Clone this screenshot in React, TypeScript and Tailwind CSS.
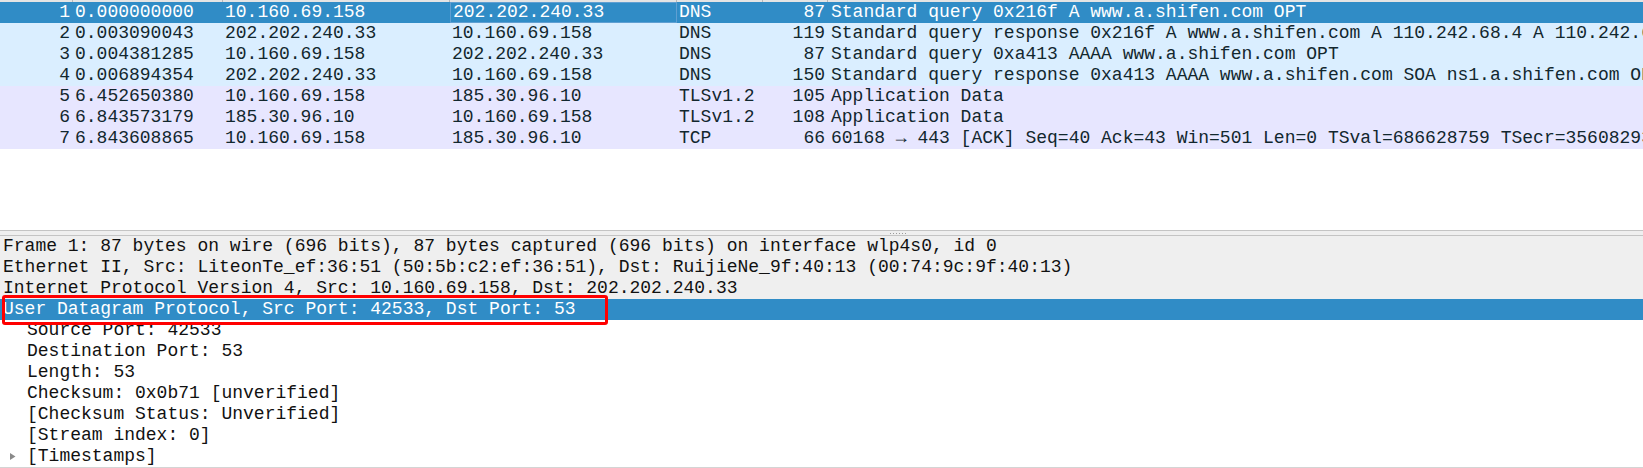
import React from "react";

type Pkt = {
  no: string;
  time: string;
  src: string;
  dst: string;
  proto: string;
  len: string;
  info: string;
  kind: "udp" | "tcp";
};

const packets: Pkt[] = [
  { no: "1", time: "0.000000000", src: "10.160.69.158", dst: "202.202.240.33", proto: "DNS", len: "87", info: "Standard query 0x216f A www.a.shifen.com OPT", kind: "udp" },
  { no: "2", time: "0.003090043", src: "202.202.240.33", dst: "10.160.69.158", proto: "DNS", len: "119", info: "Standard query response 0x216f A www.a.shifen.com A 110.242.68.4 A 110.242.68.3 OPT", kind: "udp" },
  { no: "3", time: "0.004381285", src: "10.160.69.158", dst: "202.202.240.33", proto: "DNS", len: "87", info: "Standard query 0xa413 AAAA www.a.shifen.com OPT", kind: "udp" },
  { no: "4", time: "0.006894354", src: "202.202.240.33", dst: "10.160.69.158", proto: "DNS", len: "150", info: "Standard query response 0xa413 AAAA www.a.shifen.com SOA ns1.a.shifen.com OPT", kind: "udp" },
  { no: "5", time: "6.452650380", src: "10.160.69.158", dst: "185.30.96.10", proto: "TLSv1.2", len: "105", info: "Application Data", kind: "tcp" },
  { no: "6", time: "6.843573179", src: "185.30.96.10", dst: "10.160.69.158", proto: "TLSv1.2", len: "108", info: "Application Data", kind: "tcp" },
  { no: "7", time: "6.843608865", src: "10.160.69.158", dst: "185.30.96.10", proto: "TCP", len: "66", info: "60168 \u2192 443 [ACK] Seq=40 Ack=43 Win=501 Len=0 TSval=686628759 TSecr=3560829381", kind: "tcp" },
];

const cols = "grid grid-cols-[73px_150px_227px_227px_86px_65px_1fr]";

function PacketRow({ p, selected }: { p: Pkt; selected: boolean }) {
  const bg = selected
    ? "bg-[#308cc6] text-white"
    : p.kind === "udp"
    ? "bg-[#daeeff] text-[#12272e]"
    : "bg-[#e7e6ff] text-[#12272e]";
  return (
    <div className={`${cols} h-[21px] whitespace-nowrap ${bg}`}>
      <div className="pr-[3px] text-right overflow-hidden">{p.no}</div>
      <div className="pl-[2px] overflow-hidden">{p.time}</div>
      <div className="pl-[2px] overflow-hidden">{p.src}</div>
      <div
        className={`pl-[2px] overflow-hidden ${
          selected ? "border border-[#5f9fd2] pl-[1px] leading-[19px]" : ""
        }`}
      >
        {p.dst}
      </div>
      <div className="pl-[2px] overflow-hidden">{p.proto}</div>
      <div className="pr-[3px] text-right overflow-hidden">{p.len}</div>
      <div className="pl-[3px] overflow-hidden">{p.info}</div>
    </div>
  );
}

function DetailRow({
  text,
  indent,
  tone,
  arrow,
  highlight,
}: {
  text: string;
  indent?: boolean;
  tone: "grey" | "white" | "sel";
  arrow?: boolean;
  highlight?: boolean;
}) {
  const bg =
    tone === "sel"
      ? "bg-[#308cc6] text-white"
      : tone === "grey"
      ? "bg-[#efefef] text-[#111111]"
      : "bg-white text-[#111111]";
  return (
    <div className={`relative h-[21px] flex items-center whitespace-nowrap ${bg} ${highlight ? "z-10" : ""}`}>
      <div className={`${indent ? "w-[27px]" : "w-[3px]"} h-full flex items-center shrink-0`}>
        {arrow && (
          <svg width="27" height="21" viewBox="0 0 27 21" className="shrink-0">
            <path d="M10 7 L15.5 10.5 L10 14 Z" fill="#8a8a8a" />
          </svg>
        )}
      </div>
      <span>{text}</span>
      {highlight && (
        <div className="absolute left-[2px] top-[-4px] w-[606px] h-[30px] border-[3px] border-[#ff0000] rounded-[3px] pointer-events-none z-20" />
      )}
    </div>
  );
}

export default function App() {
  return (
    <div className="w-[1643px] h-[468px] overflow-hidden bg-white font-['Liberation_Mono','DejaVu_Sans_Mono',monospace] text-[18px] leading-[21px]">
      {/* packet list */}
      <div className="h-[230px] overflow-hidden">
        <div className={`${cols} h-[2px] bg-[#e4e4e4]`}>
          <div className="border-r border-[#b8b8b8]" />
          <div className="border-r border-[#b8b8b8]" />
          <div className="border-r border-[#b8b8b8]" />
          <div className="border-r border-[#b8b8b8]" />
          <div className="border-r border-[#b8b8b8]" />
          <div className="border-r border-[#b8b8b8]" />
          <div />
        </div>
        {packets.map((p, i) => (
          <PacketRow key={p.no} p={p} selected={i === 0} />
        ))}
      </div>

      {/* splitter */}
      <div className="h-[6px] border-t border-b border-[#c4c4c4] bg-[#efefef] flex items-center justify-center">
        <div className="ml-[152px] flex gap-[2px]">
          {[0, 1, 2, 3, 4, 5].map((d) => (
            <div key={d} className="w-[1px] h-[1px] bg-[#9a9a9a]" />
          ))}
        </div>
      </div>

      {/* packet details */}
      <div className="flex flex-col">
        <DetailRow tone="grey" text="Frame 1: 87 bytes on wire (696 bits), 87 bytes captured (696 bits) on interface wlp4s0, id 0" />
        <DetailRow tone="grey" text="Ethernet II, Src: LiteonTe_ef:36:51 (50:5b:c2:ef:36:51), Dst: RuijieNe_9f:40:13 (00:74:9c:9f:40:13)" />
        <DetailRow tone="grey" text="Internet Protocol Version 4, Src: 10.160.69.158, Dst: 202.202.240.33" />
        <DetailRow tone="sel" highlight text="User Datagram Protocol, Src Port: 42533, Dst Port: 53" />
        <DetailRow tone="white" indent text="Source Port: 42533" />
        <DetailRow tone="white" indent text="Destination Port: 53" />
        <DetailRow tone="white" indent text="Length: 53" />
        <DetailRow tone="white" indent text="Checksum: 0x0b71 [unverified]" />
        <DetailRow tone="white" indent text="[Checksum Status: Unverified]" />
        <DetailRow tone="white" indent text="[Stream index: 0]" />
        <DetailRow tone="white" indent arrow text="[Timestamps]" />
        <div className="h-[1px] bg-[#d4d4d4]" />
      </div>
    </div>
  );
}
